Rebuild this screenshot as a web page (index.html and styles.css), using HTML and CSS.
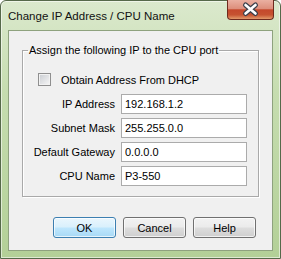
FILE: index.html
```html
<!DOCTYPE html>
<html>
<head>

    <title>Change IP Address / CPU Name</title>
    <link rel="stylesheet" href="styles.css">

</head>
<body>
    <div class="window">
        <div class="titlebar">
            <span class="title">Change IP Address / CPU Name</span>
            <button class="close-btn">
                <svg width="45" height="19" viewBox="0 0 45 19">
                    <path d="M17.5 5 L27.5 13.5 M27.5 5 L17.5 13.5" stroke="#3a3f4a" stroke-width="5" stroke-linecap="round"/>
                    <path d="M17.5 5 L27.5 13.5 M27.5 5 L17.5 13.5" stroke="#ffffff" stroke-width="2.6" stroke-linecap="round"/>
                </svg>
            </button>
        </div>

        <div class="client">
            <fieldset class="group">
                <legend>Assign the following IP to the CPU port</legend>

                <label class="check-row">
                    <span class="checkbox"></span>
                    Obtain Address From DHCP
                </label>

                <div class="field-row">
                    <label for="ip">IP Address</label>
                    <input type="text" id="ip" value="192.168.1.2">
                </div>
                <div class="field-row">
                    <label for="mask">Subnet Mask</label>
                    <input type="text" id="mask" value="255.255.0.0">
                </div>
                <div class="field-row">
                    <label for="gateway">Default Gateway</label>
                    <input type="text" id="gateway" value="0.0.0.0">
                </div>
                <div class="field-row">
                    <label for="cpuName">CPU Name</label>
                    <input type="text" id="cpuName" value="P3-550">
                </div>
            </fieldset>

            <div class="buttons">
                <button class="btn btn-default">OK</button>
                <button class="btn">Cancel</button>
                <button class="btn">Help</button>
            </div>
        </div>
    </div>
</body>
</html>
```

FILE: styles.css
```css
body {
    margin: 0;
    background-color: #ffffff;
    font-family: "Liberation Sans", Arial, sans-serif;
    color: #000000;
}

.window {
    width: 281px;
    height: 259px;
    box-sizing: border-box;
    border: 1px solid #56694a;
    border-radius: 6px 6px 0 0;
    background: linear-gradient(#dbe9cd, #c6ddb0 35%, #b3d097 100%);
    box-shadow: inset 0 0 0 1px rgba(255, 255, 255, 0.55);
    display: flex;
    flex-direction: column;
}

.titlebar {
    height: 29px;
    display: flex;
    justify-content: space-between;
    align-items: flex-start;
    padding: 0 6px 0 7px;
}

.title {
    font-size: 11.5px;
    line-height: 28px;
    padding-top: 1px;
    color: #111111;
}

.close-btn {
    width: 47px;
    height: 20px;
    margin-top: -1px;
    padding: 0;
    border: 1px solid #6e2a1e;
    border-top: none;
    border-radius: 0 0 4px 4px;
    background: linear-gradient(#eab0a2 0%, #dd8f7c 45%, #c4482c 52%, #c65231 78%, #e29a6a 100%);
    display: flex;
    align-items: center;
    justify-content: center;
}

.client {
    flex: 1;
    margin: 0 7px 7px 7px;
    border: 1px solid #8ea27e;
    background-color: #f0f0f0;
    display: flex;
    flex-direction: column;
}

.group {
    margin: 13px 13px 0 13px;
    padding: 0 0 10px 0;
    border: 1px solid #d0d0d0;
    border-color: #a9a9a9;
    box-shadow: inset 1px 1px 0 #ffffff, 1px 1px 0 #ffffff;
    font-size: 11px;
}

.group legend {
    margin-left: 5px;
    padding: 0 1px;
    line-height: 13px;
}

.check-row {
    display: flex;
    align-items: center;
    gap: 10px;
    height: 13px;
    margin-top: 16px;
    padding-left: 15px;
}

.checkbox {
    width: 11px;
    height: 11px;
    border: 1px solid #8f8f8f;
    background: linear-gradient(135deg, #c9ccd1, #f7f7f7);
    box-shadow: inset 0 0 0 1px #f2f2f2;
}

.field-row {
    display: flex;
    align-items: center;
    gap: 6px;
    margin-top: 4px;
}

.check-row + .field-row {
    margin-top: 8px;
}

.field-row label {
    width: 92px;
    text-align: right;
}

input[type="text"] {
    width: 126px;
    height: 20px;
    box-sizing: border-box;
    margin: 0;
    padding: 0 3px;
    border: 1px solid #ababab;
    background-color: #ffffff;
    font-family: "Liberation Sans", Arial, sans-serif;
    font-size: 11px;
    color: #000000;
}

.buttons {
    display: flex;
    justify-content: flex-end;
    gap: 7px;
    margin-top: 20px;
    padding-right: 16px;
}

.btn {
    width: 63px;
    height: 21px;
    padding: 0;
    border: 1px solid #707070;
    border-radius: 3px;
    background: linear-gradient(#f2f2f2 0%, #ebebeb 48%, #dddddd 52%, #cfcfcf 100%);
    box-shadow: inset 0 0 0 1px rgba(255, 255, 255, 0.7);
    font-family: "Liberation Sans", Arial, sans-serif;
    font-size: 11px;
    color: #000000;
}

.btn-default {
    border-color: #3c7fb1;
    background: linear-gradient(#eaf6fd 0%, #d9f0fc 48%, #bee6fd 52%, #a7d9f5 100%);
}
```
